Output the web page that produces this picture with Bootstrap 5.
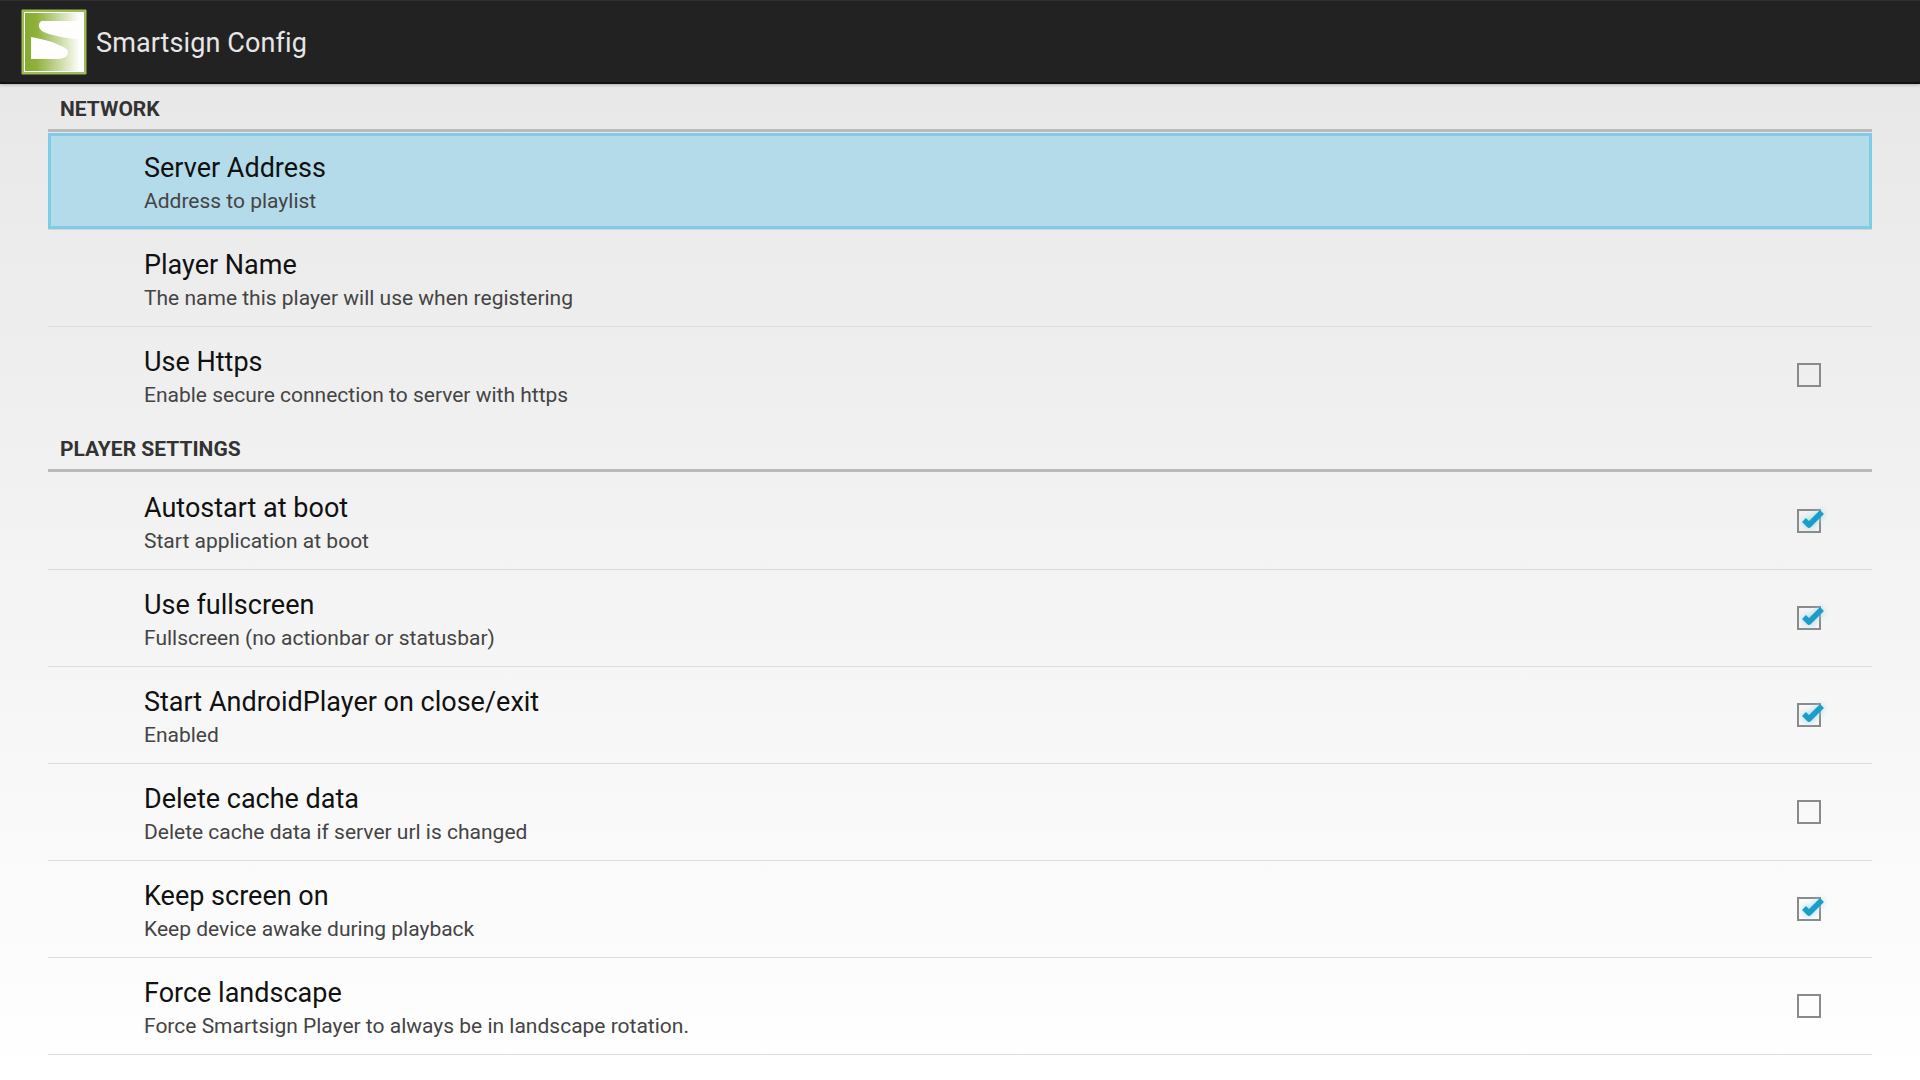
<!DOCTYPE html>
<html lang="en">
<head>
    <meta charset="UTF-8">
    <meta name="viewport" content="width=device-width, initial-scale=1.0">
    <title>Smartsign Config</title>
    <link href="https://cdn.jsdelivr.net/npm/bootstrap@5.3.0/dist/css/bootstrap.min.css" rel="stylesheet">
    <style>
        html, body { height: 100%; }
        body {
            font-family: Roboto, "Liberation Sans", sans-serif;
            overflow: hidden;
            background: linear-gradient(180deg, #e8e8e8 84px, #ffffff 100%);
        }
        .action-bar {
            height: 84px;
            padding-left: 21px;
            background: #222222;
            border-top: 1px solid #2e2e2e;
            border-bottom: 2px solid #111111;
            color: #e6e6e6;
            font-size: 27px;
            box-shadow: 0 1px 3px rgba(0, 0, 0, .25);
        }
        .action-bar span { padding-top: 4px; letter-spacing: .1px; }
        .app-logo { width: 66px; height: 66px; margin-right: 9px; flex: none; display: block; }
        .settings-list { margin: 0 48px; }
        .group-title {
            height: 48px;
            padding: 13px 12px 0;
            border-bottom: 3px solid #bababa;
            color: #333333;
            font-size: 21px;
            line-height: 25px;
            font-weight: 700;
        }
        .pref-row {
            height: 97px;
            padding: 0 48px 0 96px;
            border-bottom: 1px solid #dcdcdc;
        }
        .pref-row.no-line { border-bottom-color: transparent; }
        .pref-row.first-row { margin-top: 1px; }
        .pref-row.selected {
            height: 96px;
            margin-bottom: 1px;
            padding: 0 45px 0 93px;
            background: #b3dbea;
            border: 3px solid #7fcbe8;
            box-shadow: 0 1px 0 #d4d4d4;
        }
        .pref-text { padding-top: 4px; }
        .pref-title { color: #111111; font-size: 27px; line-height: 34px; }
        .pref-sub { color: #444444; font-size: 21px; line-height: 28px; margin-top: 2px; }
        .check-box { width: 24px; height: 24px; flex: none; margin-right: 3px; display: block; overflow: visible; }
        .tick-mark { filter: drop-shadow(0 0 3px #8fd6f0); }
    </style>
</head>
<body>
    <div class="action-bar d-flex align-items-center">
        <svg class="app-logo" viewBox="0 0 66 66">
            <defs>
                <linearGradient id="logoFill" x1="0" x2="1" y1="0" y2="0">
                    <stop offset="0" stop-color="#86ab2e"/>
                    <stop offset=".2" stop-color="#8fb13c"/>
                    <stop offset=".95" stop-color="#ffffff"/>
                </linearGradient>
            </defs>
            <rect x=".5" y=".5" width="65" height="65" rx="1" fill="#9dbb58"/>
            <rect x="3" y="3" width="60" height="60" fill="#ffffff"/>
            <rect x="4" y="4" width="58" height="58" fill="url(#logoFill)"/>
            <path d="M22 12H60V30C50 30 38 28 28 25C21 23 18 20 18 17C18 14 19 12 22 12Z" fill="#ffffff"/>
            <path d="M10 28C20 30 30 32 38 36C43 38 47 40 47 43C47 48 42 50 36 50H10Z" fill="#ffffff"/>
        </svg>
        <span>Smartsign Config</span>
    </div>

    <div class="settings-list" id="settingsList"></div>

    <script>
        // each group: title + rows, state: null = no checkbox
        const groups = [
            { title: "NETWORK", rows: [
                { t: "Server Address", s: "Address to playlist", state: null, selected: true },
                { t: "Player Name", s: "The name this player will use when registering", state: null },
                { t: "Use Https", s: "Enable secure connection to server with https", state: false, noLine: true }
            ]},
            { title: "PLAYER SETTINGS", rows: [
                { t: "Autostart at boot", s: "Start application at boot", state: true },
                { t: "Use fullscreen", s: "Fullscreen (no actionbar or statusbar)", state: true },
                { t: "Start AndroidPlayer on close/exit", s: "Enabled", state: true },
                { t: "Delete cache data", s: "Delete cache data if server url is changed", state: false },
                { t: "Keep screen on", s: "Keep device awake during playback", state: true },
                { t: "Force landscape", s: "Force Smartsign Player to always be in landscape rotation.", state: false },
                { t: "Hide system bar", s: "", state: false }
            ]}
        ];

        function checkSvg(on) {
            let tick = "";
            if (on) {
                tick = '<path class="tick-mark" d="M7 11L12 16L25 3" fill="none" stroke="#1b9cc9" stroke-width="5.5" stroke-linejoin="round"/>';
            }
            return '<svg class="check-box" viewBox="0 0 24 24">' +
                   '<rect x="1" y="1" width="22" height="22" fill="none" stroke="#8a8a8a" stroke-width="2"/>' + tick + '</svg>';
        }

        const list = document.getElementById("settingsList");
        groups.forEach((g) => {
            let head = document.createElement("div");
            head.className = "group-title";
            head.innerText = g.title;
            list.appendChild(head);

            g.rows.forEach((r, i) => {
                let row = document.createElement("div");
                row.className = "pref-row d-flex align-items-center justify-content-between";
                if (i === 0) row.classList.add("first-row");
                if (r.selected) row.classList.add("selected");
                if (r.noLine) row.classList.add("no-line");
                row.innerHTML = '<div class="pref-text"><div class="pref-title">' + r.t + '</div><div class="pref-sub">' + r.s + '</div></div>' +
                                (r.state === null ? "" : checkSvg(r.state));
                list.appendChild(row);
            });
        });
    </script>

    <script src="https://cdn.jsdelivr.net/npm/bootstrap@5.3.0/dist/js/bootstrap.bundle.min.js"></script>
</body>
</html>
